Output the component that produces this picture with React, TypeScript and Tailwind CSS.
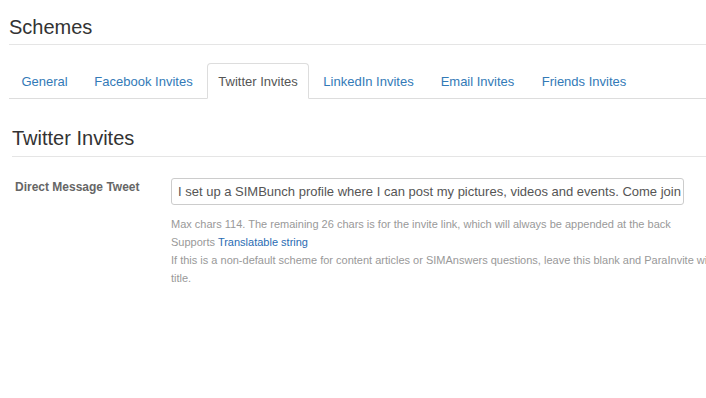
import React from "react";

const tabs = [
  { label: "General", w: "w-[71px]" },
  { label: "Facebook Invites", w: "w-[123px]" },
  { label: "Twitter Invites", w: "w-[102px]", active: true },
  { label: "LinkedIn Invites", w: "w-[115px]" },
  { label: "Email Invites", w: "w-[99px]" },
  { label: "Friends Invites", w: "w-[110px]" },
];

export default function App() {
  return (
    <div className="w-[706px] h-[398px] overflow-hidden bg-white font-['Liberation_Sans',Arial,sans-serif]">
      <div className="w-[1100px] pl-[9px]">
        <div className="pt-[15px] pb-[5px] border-b border-[#e5e5e5]">
          <h1 className="text-[20px] leading-[24px] text-[#333]">Schemes</h1>
        </div>

        <ul className="mt-[18px] flex border-b border-[#ddd]">
          {tabs.map((t) => (
            <li key={t.label} className="-mb-px mr-[2px]">
              <div
                className={
                  t.active
                    ? `${t.w} flex justify-center rounded-t-[4px] border border-[#ddd] border-b-transparent bg-white pt-[2px] text-[13px] leading-[32px] text-[#555]`
                    : `${t.w} flex justify-center rounded-t-[4px] border border-transparent pt-[2px] text-[13px] leading-[32px] text-[#337ab7]`
                }
              >
                {t.label}
              </div>
            </li>
          ))}
        </ul>

        <div className="pl-[3px]">
          <div className="mt-[27px] pb-[6px] border-b border-[#e5e5e5]">
            <h2 className="text-[20px] leading-[24px] text-[#333]">Twitter Invites</h2>
          </div>

          <div className="mt-[21px] flex items-start">
            <label className="w-[159px] pl-[3px] pt-[1px] text-[12px] font-bold leading-[17px] text-[#666]">
              Direct Message Tweet
            </label>
            <div className="flex flex-col">
              <div className="w-[513px] h-[27px] overflow-hidden rounded-[3px] border border-[#ccc] bg-white px-[6px] text-[13px] leading-[25px] text-[#555] whitespace-nowrap">
                I set up a SIMBunch profile where I can post my pictures, videos and events. Come join me!
              </div>
              <div className="mt-[10px] text-[11px] leading-[18px] text-[#999]">
                <div className="whitespace-nowrap">
                  Max chars 114. The remaining 26 chars is for the invite link, which will always be appended at the back
                </div>
                <div className="whitespace-nowrap">
                  Supports <span className="text-[#2a6cb3]">Translatable string</span>
                </div>
                <div className="whitespace-nowrap">
                  If this is a non-default scheme for content articles or SIMAnswers questions, leave this blank and ParaInvite will use the content's
                </div>
                <div className="whitespace-nowrap">title.</div>
              </div>
            </div>
          </div>
        </div>
      </div>
    </div>
  );
}
